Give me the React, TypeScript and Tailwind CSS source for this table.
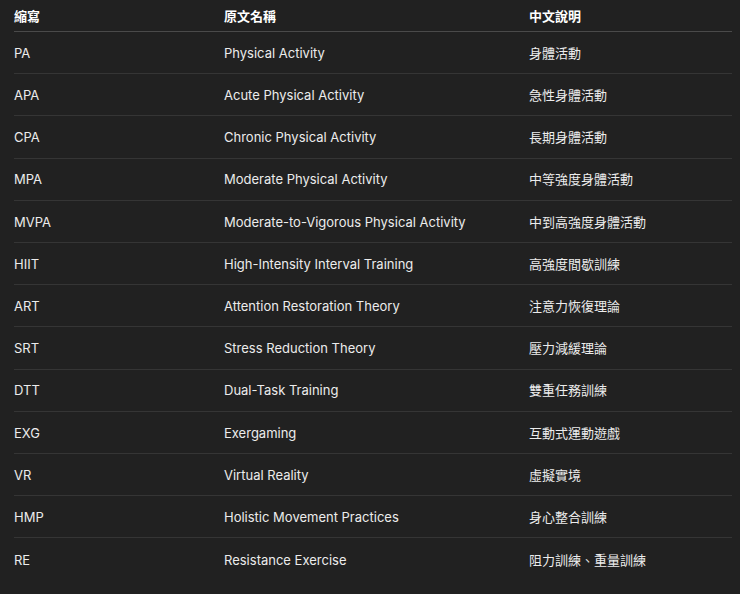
const rows: [string, string, string][] = [
  ["PA", "Physical Activity", "身體活動"],
  ["APA", "Acute Physical Activity", "急性身體活動"],
  ["CPA", "Chronic Physical Activity", "長期身體活動"],
  ["MPA", "Moderate Physical Activity", "中等強度身體活動"],
  ["MVPA", "Moderate-to-Vigorous Physical Activity", "中到高強度身體活動"],
  ["HIIT", "High-Intensity Interval Training", "高強度間歇訓練"],
  ["ART", "Attention Restoration Theory", "注意力恢復理論"],
  ["SRT", "Stress Reduction Theory", "壓力減緩理論"],
  ["DTT", "Dual-Task Training", "雙重任務訓練"],
  ["EXG", "Exergaming", "互動式運動遊戲"],
  ["VR", "Virtual Reality", "虛擬實境"],
  ["HMP", "Holistic Movement Practices", "身心整合訓練"],
  ["RE", "Resistance Exercise", "阻力訓練、重量訓練"],
];

export default function App() {
  return (
    <div
      className="min-h-[594px] w-[740px] bg-[#212121] pl-[14px] pr-[8px] text-[13px] text-[#ececec]"
      style={{ fontFamily: 'Inter, "Noto Sans CJK TC", sans-serif' }}
    >
      <div className="grid h-[32px] grid-cols-[210px_305px_1fr] items-center border-b border-[#4a4a4a] pt-[3px] font-bold text-white">
        <div>縮寫</div>
        <div>原文名稱</div>
        <div>中文說明</div>
      </div>
      {rows.map(([abbr, en, zh], i) => (
        <div
          key={abbr}
          className={
            "grid h-[42.2px] grid-cols-[210px_305px_1fr] items-center pt-[2px] " +
            (i < rows.length - 1 ? "border-b border-[#353535]" : "")
          }
        >
          <div>{abbr}</div>
          <div>{en}</div>
          <div>{zh}</div>
        </div>
      ))}
    </div>
  );
}
